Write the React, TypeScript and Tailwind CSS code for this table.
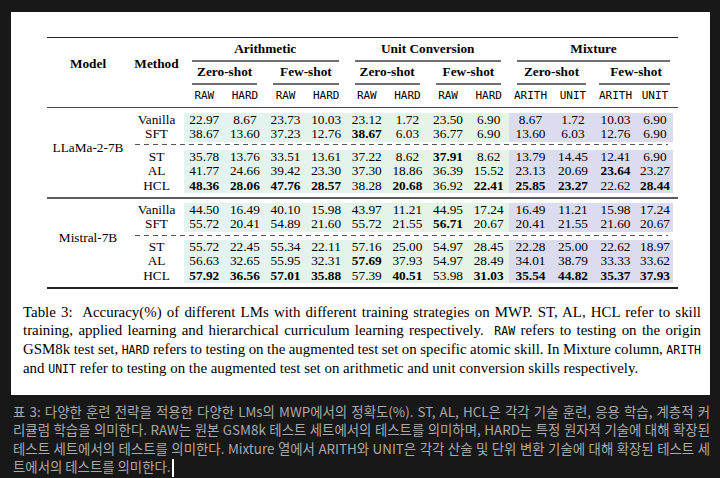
import React from "react";

type Blk = { m: string; v: string[] }[];

const llama: Blk = [
  { m: "Vanilla", v: ["22.97", "8.67", "23.73", "10.03", "23.12", "1.72", "23.50", "6.90", "8.67", "1.72", "10.03", "6.90"] },
  { m: "SFT", v: ["38.67", "13.60", "37.23", "12.76", "*38.67", "6.03", "36.77", "6.90", "13.60", "6.03", "12.76", "6.90"] },
  { m: "ST", v: ["35.78", "13.76", "33.51", "13.61", "37.22", "8.62", "*37.91", "8.62", "13.79", "14.45", "12.41", "6.90"] },
  { m: "AL", v: ["41.77", "24.66", "39.42", "23.30", "37.30", "18.86", "36.39", "15.52", "23.13", "20.69", "*23.64", "23.27"] },
  { m: "HCL", v: ["*48.36", "*28.06", "*47.76", "*28.57", "38.28", "*20.68", "36.92", "*22.41", "*25.85", "*23.27", "22.62", "*28.44"] },
];

const mistral: Blk = [
  { m: "Vanilla", v: ["44.50", "16.49", "40.10", "15.98", "43.97", "11.21", "44.95", "17.24", "16.49", "11.21", "15.98", "17.24"] },
  { m: "SFT", v: ["55.72", "20.41", "54.89", "21.60", "55.72", "21.55", "*56.71", "20.67", "20.41", "21.55", "21.60", "20.67"] },
  { m: "ST", v: ["55.72", "22.45", "55.34", "22.11", "57.16", "25.00", "54.97", "28.45", "22.28", "25.00", "22.62", "18.97"] },
  { m: "AL", v: ["56.63", "32.65", "55.95", "32.31", "*57.69", "37.93", "54.97", "28.49", "34.01", "38.79", "33.33", "33.62"] },
  { m: "HCL", v: ["*57.92", "*36.56", "*57.01", "*35.88", "57.39", "*40.51", "53.98", "*31.03", "*35.54", "*44.82", "*35.37", "*37.93"] },
];

const purpleW = ["w-[43px]", "w-[42px]", "w-[43px]", "w-[36px]"];

function Cell({ s, w }: { s: string; w: string }) {
  const bold = s.startsWith("*");
  return <div className={`${w} text-center ${bold ? "font-bold" : ""}`}>{bold ? s.slice(1) : s}</div>;
}

function Row({ m, v }: { m: string; v: string[] }) {
  return (
    <div className="flex h-[14.5px] leading-[14.5px]">
      <div className="w-[55px] text-center">{m}</div>
      <div className="flex w-[325px] bg-[linear-gradient(90deg,#e3f3f1,#e5f4e3)]">
        {v.slice(0, 8).map((s, i) => (
          <Cell key={i} s={s} w="w-[40.625px]" />
        ))}
      </div>
      <div className="flex w-[164px] bg-[#dcdcef]">
        {v.slice(8).map((s, i) => (
          <Cell key={i} s={s} w={purpleW[i]} />
        ))}
      </div>
    </div>
  );
}

function Dashed({ cls }: { cls: string }) {
  return (
    <div className={cls}>
      <div className="ml-[6px] mr-[5px] h-[1px] bg-[repeating-linear-gradient(90deg,#555_0px,#555_5px,transparent_5px,transparent_9px)]" />
    </div>
  );
}

function Block({ name, rows, dashCls }: { name: string; rows: Blk; dashCls: string }) {
  return (
    <div className="flex">
      <div className="w-[82px] flex items-center justify-center pb-[9px]">{name}</div>
      <div className="flex flex-col">
        {rows.slice(0, 2).map((r) => (
          <Row key={r.m} m={r.m} v={r.v} />
        ))}
        <Dashed cls={dashCls} />
        {rows.slice(2).map((r) => (
          <Row key={r.m} m={r.m} v={r.v} />
        ))}
      </div>
    </div>
  );
}

const Rule = () => <div className="h-full bg-[#707070]" />;

function Mono({ children }: { children: React.ReactNode }) {
  return <span className="font-['DejaVu_Sans_Mono',monospace] text-[11.5px]">{children}</span>;
}

export default function App() {
  const subHead = ["RAW", "HARD", "RAW", "HARD", "RAW", "HARD", "RAW", "HARD"];
  return (
    <div className="w-[720px] h-[478px] overflow-hidden bg-[#181818]">
      <div className="ml-[11px] mt-[12px] w-[699px] h-[383px] bg-white pt-[24.5px] font-['Liberation_Serif',serif] text-black">
        <div className="ml-[36px] w-[631px] text-[13.3px]">
          <div className="h-[1.5px] bg-[#222]" />
          {/* header */}
          <div className="flex font-bold">
            <div className="w-[82px] pt-[17.5px] text-center leading-[16px]">Model</div>
            <div className="w-[55px] pt-[17.5px] text-center leading-[16px]">Method</div>
            <div className="w-[494px] flex flex-col">
              <div className="flex h-[22px] items-center">
                <div className="w-[162.5px] text-center">Arithmetic</div>
                <div className="w-[162.5px] text-center">Unit Conversion</div>
                <div className="w-[169px] text-center">Mixture</div>
              </div>
              <div className="flex h-[1.5px]">
                <div className="w-[162.5px] px-[8px]"><Rule /></div>
                <div className="w-[162.5px] px-[8px]"><Rule /></div>
                <div className="w-[169px] px-[8px]"><Rule /></div>
              </div>
              <div className="flex h-[21.5px] items-center">
                <div className="w-[81.25px] text-center">Zero-shot</div>
                <div className="w-[81.25px] text-center">Few-shot</div>
                <div className="w-[81.25px] text-center">Zero-shot</div>
                <div className="w-[81.25px] text-center">Few-shot</div>
                <div className="w-[85px] text-center">Zero-shot</div>
                <div className="w-[84px] text-center">Few-shot</div>
              </div>
              <div className="flex h-[1.5px]">
                <div className="w-[81.25px] px-[8px]"><Rule /></div>
                <div className="w-[81.25px] px-[8px]"><Rule /></div>
                <div className="w-[81.25px] px-[8px]"><Rule /></div>
                <div className="w-[81.25px] px-[8px]"><Rule /></div>
                <div className="w-[85px] px-[8px]"><Rule /></div>
                <div className="w-[84px] pl-[5px] pr-[8px]"><Rule /></div>
              </div>
              <div className="flex h-[22.5px] items-center font-normal font-['DejaVu_Sans_Mono',monospace] text-[11px]">
                {subHead.map((s, i) => (
                  <div key={i} className="w-[40.625px] text-center">{s}</div>
                ))}
                <div className="w-[43px] text-center">ARITH</div>
                <div className="w-[42px] text-center">UNIT</div>
                <div className="w-[43px] text-center">ARITH</div>
                <div className="w-[41px] text-center pr-[5px]">UNIT</div>
              </div>
            </div>
          </div>
          <div className="h-[1px] bg-[#444]" />
          {/* body */}
          <div className="pt-[4.5px]">
            <Block name="LLaMa-2-7B" rows={llama} dashCls="pt-[2px] pb-[5px]" />
          </div>
          <div className="mt-[4px] h-[2px] bg-[#5c5c5c]" />
          <div className="pt-[3.5px]">
            <Block name="Mistral-7B" rows={mistral} dashCls="pt-[3.5px] pb-[3.5px]" />
          </div>
          <div className="mt-[4px] h-[1.5px] bg-[#222]" />
        </div>
        {/* caption */}
        <div className="ml-[12px] mt-[14px] w-[678px] text-[14.9px] leading-[18px]">
          <div className="text-justify [text-align-last:justify] whitespace-nowrap">
            Table 3:&nbsp; Accuracy(%) of different LMs with different training strategies on MWP. ST, AL, HCL refer to skill
          </div>
          <div className="text-justify [text-align-last:justify] whitespace-nowrap">
            training, applied learning and hierarchical curriculum learning respectively.&nbsp; <Mono>RAW</Mono> refers to testing on the origin
          </div>
          <div className="text-justify [text-align-last:justify] whitespace-nowrap [word-spacing:-1px]">
            GSM8k test set, <Mono>HARD</Mono> refers to testing on the augmented test set on specific atomic skill. In Mixture column, <Mono>ARITH</Mono>
          </div>
          <div className="whitespace-nowrap">
            and <Mono>UNIT</Mono> refer to testing on the augmented test set on arithmetic and unit conversion skills respectively.
          </div>
        </div>
      </div>
      {/* korean */}
      <div className="ml-[13px] w-[697px] pt-[7px] text-[13.4px] leading-[18.3px] text-[#a9a9a9] font-['Noto_Sans_CJK_KR',sans-serif]">
        <div className="text-justify [text-align-last:justify] whitespace-nowrap">표 3: 다양한 훈련 전략을 적용한 다양한 LMs의 MWP에서의 정확도(%). ST, AL, HCL은 각각 기술 훈련, 응용 학습, 계층적 커</div>
        <div className="text-justify [text-align-last:justify] whitespace-nowrap">리큘럼 학습을 의미한다. RAW는 원본 GSM8k 테스트 세트에서의 테스트를 의미하며, HARD는 특정 원자적 기술에 대해 확장된</div>
        <div className="text-justify [text-align-last:justify] whitespace-nowrap">테스트 세트에서의 테스트를 의미한다. Mixture 열에서 ARITH와 UNIT은 각각 산술 및 단위 변환 기술에 대해 확장된 테스트 세</div>
        <div className="whitespace-nowrap">
          트에서의 테스트를 의미한다.
          <span className="inline-block w-[2px] h-[18px] bg-white align-middle ml-[1px]" />
        </div>
      </div>
    </div>
  );
}
